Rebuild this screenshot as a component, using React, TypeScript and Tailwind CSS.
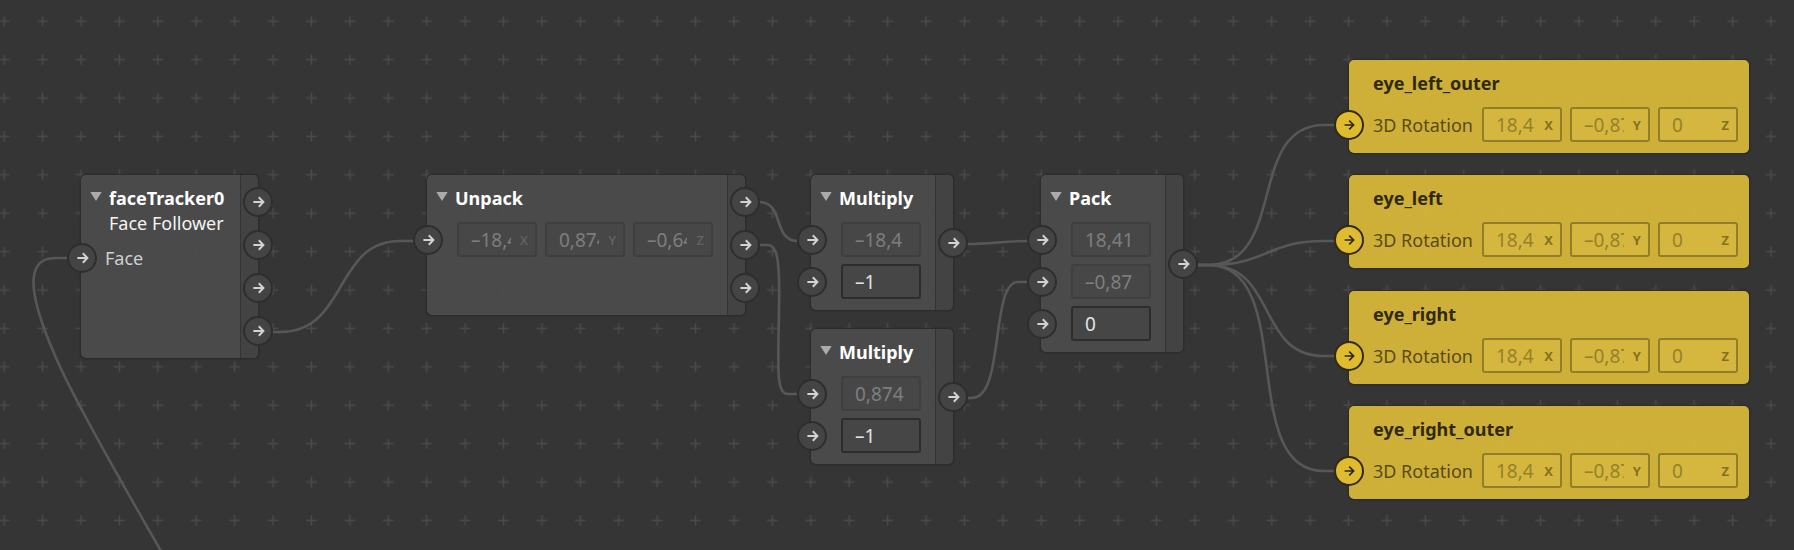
import React, { useId, useState } from "react";
import clsx from "clsx";

type Tone = "dark" | "gold";

type Field = {
  name: string;
  value: string;
  axis?: string;
  linked?: boolean;
};

type Row = {
  label?: string;
  fields: Field[];
};

type GraphNode = {
  id: string;
  place: string;
  tone: Tone;
  title: string;
  subtitle?: string;
  rows: Row[];
  outputs: number;
  centered?: boolean;
};

const rotation: Row = {
  label: "3D Rotation",
  fields: [
    { name: "X", value: "18,41", axis: "X", linked: true },
    { name: "Y", value: "–0,87", axis: "Y", linked: true },
    { name: "Z", value: "0", axis: "Z", linked: true },
  ],
};

const nodes: GraphNode[] = [
  {
    id: "tracker",
    place: "left-[81px] top-[175px] w-[177px]",
    tone: "dark",
    title: "faceTracker0",
    subtitle: "Face Follower",
    rows: [{ label: "Face", fields: [] }],
    outputs: 4,
  },
  {
    id: "unpack",
    place: "left-[427px] top-[175px]",
    tone: "dark",
    title: "Unpack",
    rows: [
      {
        fields: [
          { name: "X", value: "–18,41", axis: "X", linked: true },
          { name: "Y", value: "0,874", axis: "Y", linked: true },
          { name: "Z", value: "–0,64", axis: "Z", linked: true },
        ],
      },
    ],
    outputs: 3,
  },
  {
    id: "multiply-a",
    place: "left-[811px] top-[175px]",
    tone: "dark",
    title: "Multiply",
    rows: [
      { fields: [{ name: "A", value: "–18,4", linked: true }] },
      { fields: [{ name: "B", value: "–1" }] },
    ],
    outputs: 1,
    centered: true,
  },
  {
    id: "multiply-b",
    place: "left-[811px] top-[329px]",
    tone: "dark",
    title: "Multiply",
    rows: [
      { fields: [{ name: "A", value: "0,874", linked: true }] },
      { fields: [{ name: "B", value: "–1" }] },
    ],
    outputs: 1,
    centered: true,
  },
  {
    id: "pack",
    place: "left-[1041px] top-[175px]",
    tone: "dark",
    title: "Pack",
    rows: [
      { fields: [{ name: "X", value: "18,41", linked: true }] },
      { fields: [{ name: "Y", value: "–0,87", linked: true }] },
      { fields: [{ name: "Z", value: "0" }] },
    ],
    outputs: 1,
    centered: true,
  },
  {
    id: "eye-left-outer",
    place: "left-[1349px] top-[60px] w-[400px]",
    tone: "gold",
    title: "eye_left_outer",
    rows: [rotation],
    outputs: 0,
  },
  {
    id: "eye-left",
    place: "left-[1349px] top-[175px] w-[400px]",
    tone: "gold",
    title: "eye_left",
    rows: [rotation],
    outputs: 0,
  },
  {
    id: "eye-right",
    place: "left-[1349px] top-[291px] w-[400px]",
    tone: "gold",
    title: "eye_right",
    rows: [rotation],
    outputs: 0,
  },
  {
    id: "eye-right-outer",
    place: "left-[1349px] top-[406px] w-[400px]",
    tone: "gold",
    title: "eye_right_outer",
    rows: [rotation],
    outputs: 0,
  },
];

const wires = [
  "M68 258 H55 C39 258 33.5 268 33.5 283 C33.5 300 44 332 61 369 C82 413 120 480 161 551",
  "M273 332 H280 C348 332 334 241 400 241 H414",
  "M759 202 C785 202 772 241 798 241",
  "M759 245 H768 C778 245 780 265 779 310 C778 370 776 394 788 394 H798",
  "M967 244 C990 244 1005 241 1028 241",
  "M967 398 H972 C1005 398 990 282 1018 282 H1028",
  "M1198 265 H1208 C1288 265 1246 125 1324 125 H1336",
  "M1198 265 H1208 C1268 265 1266 241 1324 241 H1336",
  "M1198 265 H1208 C1278 265 1256 356 1324 356 H1336",
  "M1198 265 H1208 C1298 265 1236 471 1324 471 H1336",
];

function Backdrop() {
  return (
    <svg className="absolute inset-0 h-full w-full" aria-hidden="true">
      <defs>
        <pattern id="crosses" x="-15" y="2" width="38.41" height="38.4" patternUnits="userSpaceOnUse">
          <path d="M14 19.2 H24.4 M19.2 14 V24.4" stroke="#4a4a4a" strokeWidth="1.5" />
        </pattern>
      </defs>
      <rect width="100%" height="100%" fill="url(#crosses)" />
      <g fill="none" stroke="#575757" strokeWidth="2.6">
        {wires.map((d) => (
          <path key={d} d={d} />
        ))}
      </g>
    </svg>
  );
}

function Port({ tone, label, side }: { tone: Tone; label: string; side: "in" | "out" }) {
  return (
    <button
      type="button"
      aria-label={label}
      className={clsx(
        "relative flex size-[30px] shrink-0 items-center justify-center rounded-full border-2",
        side === "out" ? "-mr-[15px]" : tone === "gold" ? "-ml-[15px]" : "-ml-[14px]",
        tone === "dark" ? "border-[#2e2e2e] bg-[#444444] text-[#d2d2d2]" : "border-[#33290f] bg-[#dfbb30] text-[#2f2713]",
      )}
    >
      <svg
        viewBox="0 0 14 14"
        className="size-[14px]"
        fill="none"
        stroke="currentColor"
        strokeWidth={tone === "gold" ? 1.7 : 2}
        aria-hidden="true"
      >
        {tone === "gold" ? <path d="M2.6 7 H11.2 M7.2 2.6 L11.6 7 L7.2 11.4" /> : <path d="M2.4 7 H12 M7.8 2.2 L12.4 7 L7.8 11.8" />}
      </svg>
    </button>
  );
}

function NumberField({ field, tone, owner }: { field: Field; tone: Tone; owner: string }) {
  const [value, setValue] = useState(field.value);
  const id = useId();
  return (
    <div
      className={clsx(
        "flex h-[35px] w-20 items-center rounded-[3px] border-2 pl-3",
        tone === "gold" && "border-[#927d2a] bg-[#d5b740] text-[#958129]",
        tone === "dark" && field.linked && "border-[#3f3f3f] bg-[#474747] text-[#7e7e7e]",
        tone === "dark" && !field.linked && "border-[#2d2d2d] bg-[#464646] text-[#e2e2e2]",
      )}
    >
      <input
        id={id}
        aria-label={`${owner} ${field.name}`}
        value={value}
        readOnly={field.linked}
        onChange={(e) => setValue(e.target.value)}
        className={clsx("bg-transparent text-[19px] leading-6 outline-none", field.axis ? "w-10" : "w-[58px]")}
      />
      {field.axis && (
        <label
          htmlFor={id}
          className={clsx(
            "flex-1 pr-[7px] text-right text-[13px] leading-6",
            tone === "gold" ? "font-bold text-[#86711f]" : "font-medium text-[#646464]",
          )}
        >
          {field.axis}
        </label>
      )}
    </div>
  );
}

function NodeCard({ node }: { node: GraphNode }) {
  const gold = node.tone === "gold";
  return (
    <section
      aria-label={node.title}
      className={clsx(
        "absolute flex rounded-[5px] shadow-[0_0_0_1px_#2c2c2c,0_0_2px_1px_rgba(0,0,0,0.25)]",
        gold ? "bg-[#d4b539]/97" : "bg-[#4c4c4c]/92",
        node.place,
      )}
    >
      <div className="min-w-0 flex-1 pb-[11px]">
        <header className={clsx("flex items-start pt-[11px] pb-3", gold ? "pl-6" : "pl-[9px]")}>
          {!gold && (
            <button type="button" aria-label={`Collapse ${node.title}`} className="flex h-5 w-[19px] items-center text-[#ababab]">
              <svg viewBox="0 0 12 9" className="h-[9px] w-3" fill="currentColor" aria-hidden="true">
                <path d="M0.3 0 H11.7 L6 9 Z" />
              </svg>
            </button>
          )}
          <div className="text-[18px] leading-6 whitespace-nowrap">
            <h2 className={clsx("font-bold", gold ? "text-[#30280f]" : "text-white")}>{node.title}</h2>
            {node.subtitle && <p className="leading-[26px] text-[#f4f4f4]">{node.subtitle}</p>}
          </div>
        </header>
        <div className="flex flex-col gap-[7px]">
          {node.rows.map((row, i) => (
            <div key={i} className={clsx("flex items-center", row.fields.length ? "h-[35px]" : "h-5")}>
              <Port tone={node.tone} side="in" label={`${node.title} input ${i + 1}`} />
              {row.label && (
                <span
                  className={clsx(
                    "flex-1 text-[18px] leading-6 whitespace-nowrap",
                    gold ? "pl-[9px] text-[#5a4b19]" : "pl-2 text-[#cfcfcf]",
                  )}
                >
                  {row.label}
                </span>
              )}
              {row.fields.length > 0 && (
                <div className={clsx("flex gap-2", gold ? "pr-[11px]" : "px-[14px]")}>
                  {row.fields.map((f) => (
                    <NumberField key={f.name} field={f} tone={node.tone} owner={node.title} />
                  ))}
                </div>
              )}
            </div>
          ))}
        </div>
      </div>
      {node.outputs > 0 && (
        <div
          className={clsx(
            "flex w-[18px] flex-col items-end gap-[13px] rounded-r-[5px] border-l border-[#333333] bg-[#434343] py-3",
            node.centered && "justify-center",
          )}
        >
          {Array.from({ length: node.outputs }, (_, i) => (
            <Port key={i} tone={node.tone} side="out" label={`${node.title} output ${i + 1}`} />
          ))}
        </div>
      )}
    </section>
  );
}

export default function App() {
  return (
    <main className="relative min-h-screen overflow-hidden bg-[#353535] font-['Noto_Sans','Open_Sans',sans-serif]">
      <Backdrop />
      {nodes.map((n) => (
        <NodeCard key={n.id} node={n} />
      ))}
    </main>
  );
}
